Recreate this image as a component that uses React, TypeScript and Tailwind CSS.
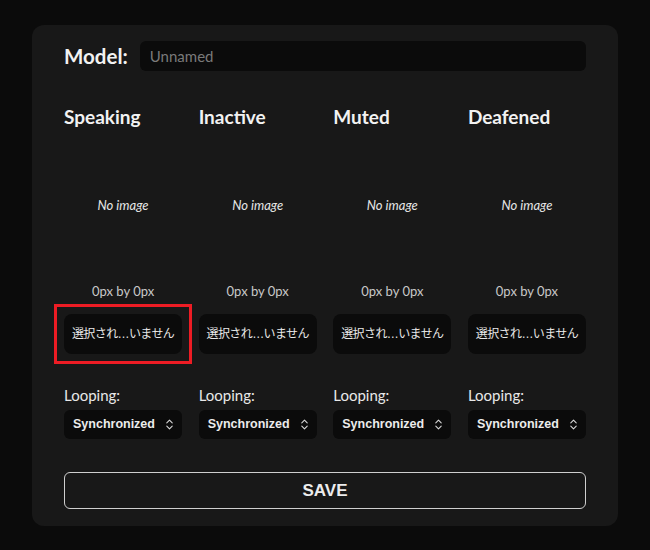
import { ChevronsUpDown } from "lucide-react";

const states = ["Speaking", "Inactive", "Muted", "Deafened"];

const heading = "font-['Lato','Open_Sans',sans-serif]";
const system = "font-['Liberation_Sans','Noto_Sans_CJK_JP',sans-serif]";

function StateColumn({ name, marked }: { name: string; marked?: boolean }) {
  return (
    <div className="flex flex-col">
      <h2 className={`${heading} h-[23px] text-[19px] font-bold leading-[23px] text-[#f2f2f2]`}>
        {name}
      </h2>
      <div className="flex h-[155px] items-center justify-center">
        <span className={`${heading} text-[13px] italic text-[#e6e6e6]`}>No image</span>
      </div>
      <p className={`${heading} h-[16px] text-center text-[13px] leading-[16px] text-[#c8c8c8]`}>
        0px by 0px
      </p>
      <div className="relative mt-[15px]">
        <button
          className={`${system} flex h-[40px] w-full items-center justify-center rounded-lg bg-[#0b0b0b] text-[12px] tracking-[-0.6px] text-[#e8e8e8]`}
        >
          選択され…いません
        </button>
        {marked && (
          <div className="pointer-events-none absolute -inset-[10px] border-[3px] border-[#ed1c24]" />
        )}
      </div>
      <label className={`${heading} mt-[32px] text-[15px] leading-[18px] text-[#e8e8e8]`}>
        Looping:
      </label>
      <div
        className={`${system} mt-[6px] flex h-[29px] items-center gap-[8px] rounded-md bg-[#0b0b0b] pl-[9px] text-[12.5px] font-bold text-[#ececec]`}
      >
        <span>Synchronized</span>
        <ChevronsUpDown size={13} strokeWidth={2} className="text-[#d8d8d8]" />
      </div>
    </div>
  );
}

export default function App() {
  return (
    <div className="min-h-[550px] bg-[#0b0b0b] pt-[25px]">
      <div className="mx-[32px] rounded-xl bg-[#181818] px-[32px] pb-[17px] pt-[16px]">
        <div className="flex items-center gap-[12px]">
          <span className={`${heading} text-[20.5px] font-bold text-[#f2f2f2]`}>Model:</span>
          <input
            placeholder="Unnamed"
            className={`${heading} h-[30px] flex-1 rounded-md bg-[#0b0b0b] px-[10px] text-[15px] text-white outline-none placeholder:text-[#7a7a7a]`}
          />
        </div>
        <div className="mt-[33px] grid grid-cols-4 gap-x-[16.5px]">
          {states.map((s, i) => (
            <StateColumn key={s} name={s} marked={i === 0} />
          ))}
        </div>
        <button
          className={`${system} mt-[33px] flex h-[37px] w-full items-center justify-center rounded-md border border-[#cfcfcf] text-[17px] font-bold text-[#ececec]`}
        >
          SAVE
        </button>
      </div>
    </div>
  );
}
